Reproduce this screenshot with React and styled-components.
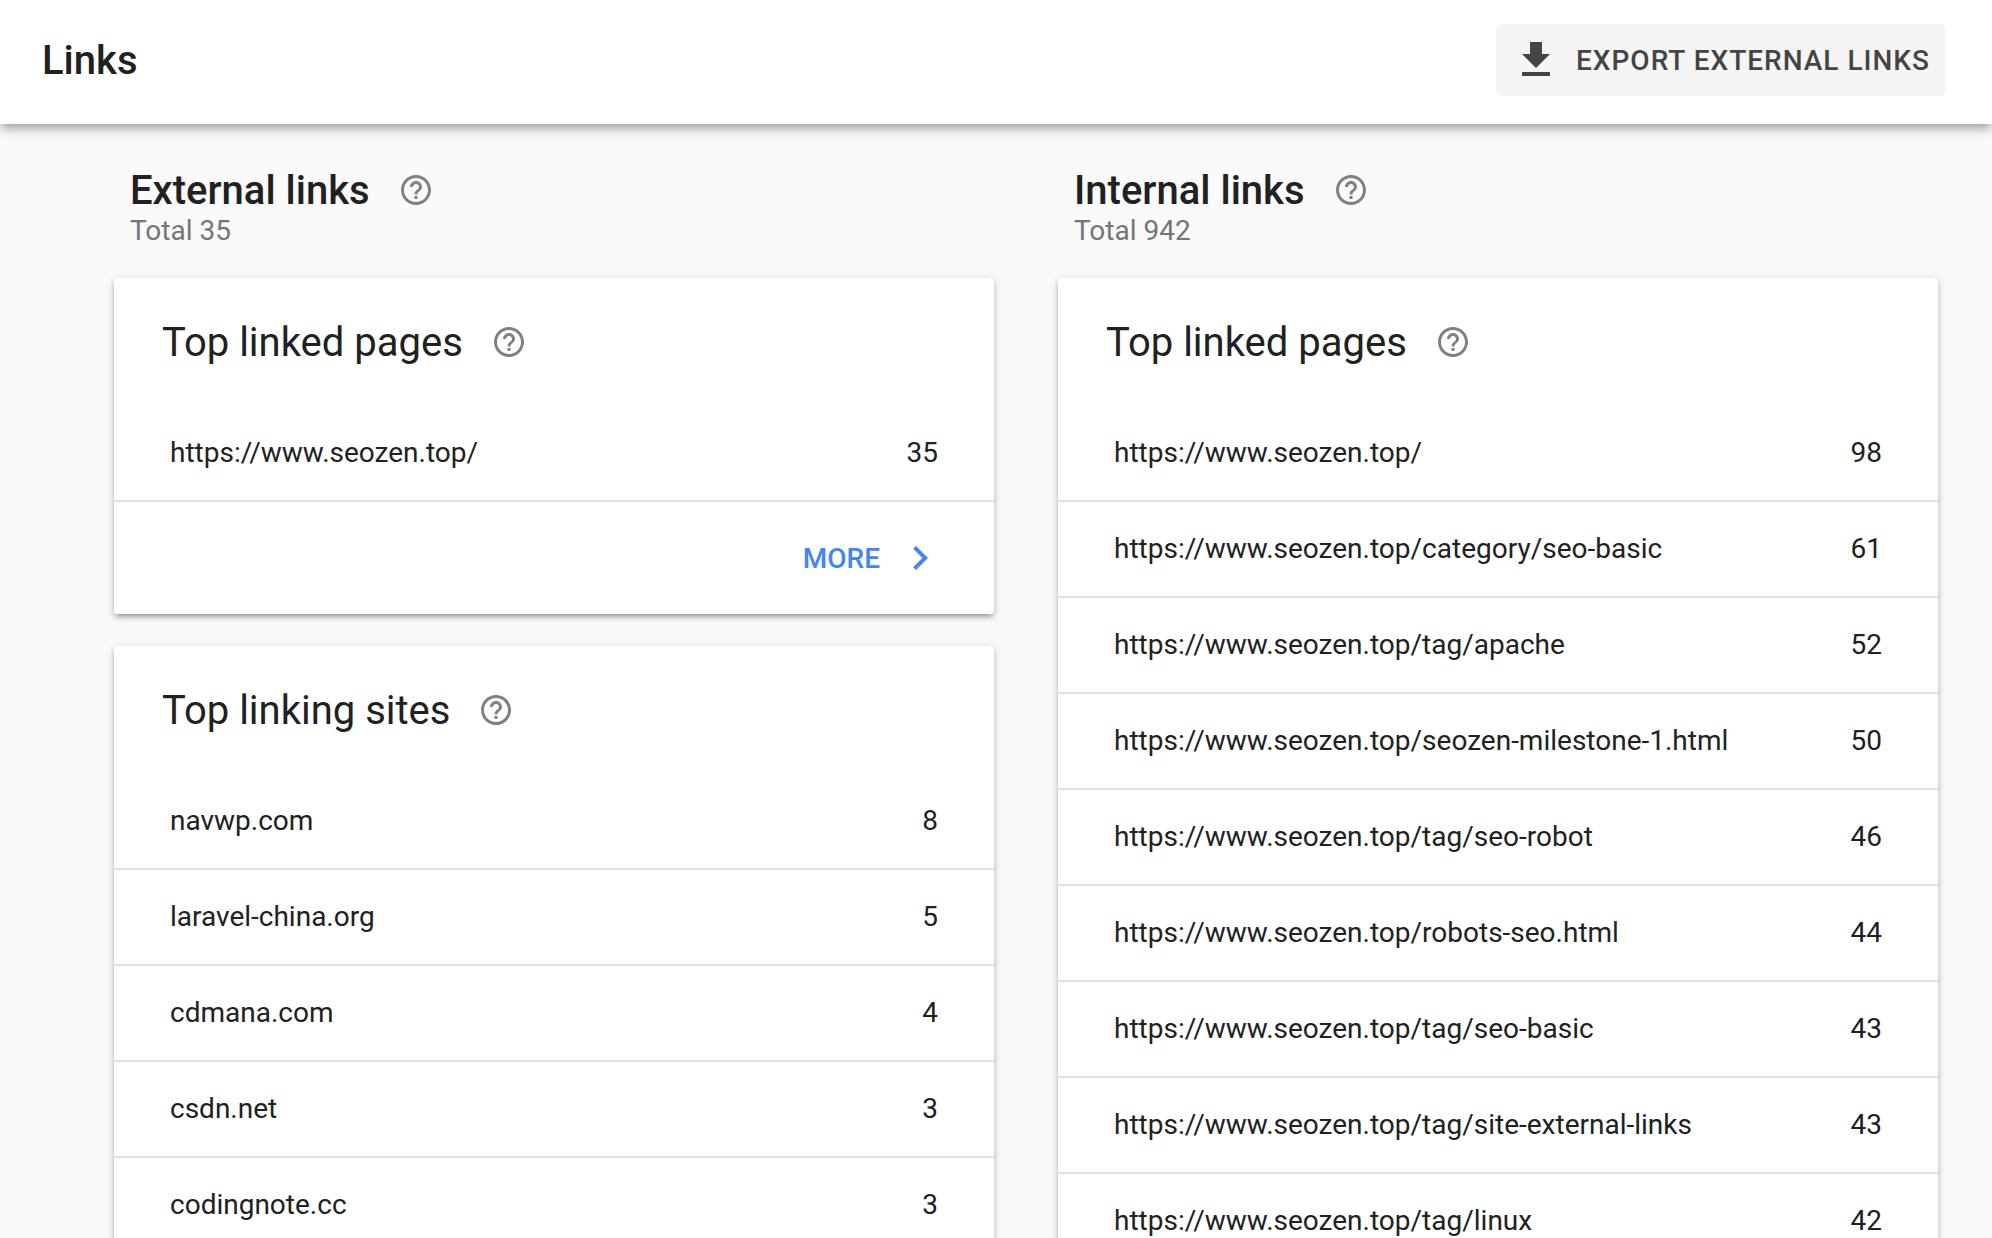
import React from "react";
import styled, { createGlobalStyle } from "styled-components";

const GlobalStyle = createGlobalStyle`
  * {
    box-sizing: border-box;
  }

  html {
    scrollbar-width: none;
  }

  body {
    margin: 0;
    background-color: #fafafa;
    color: #212121;
    font-family: Roboto, "Noto Sans", sans-serif;
    font-size: 28px;
    line-height: 40px;
  }
`;

const Header = styled.header`
  display: flex;
  align-items: center;
  justify-content: space-between;
  padding: 24px 46px 28px 42px;
  background-color: #ffffff;
  box-shadow: 0 6px 8px rgba(0, 0, 0, 0.14), 0 6px 6px -4px rgba(0, 0, 0, 0.12),
    0 2px 16px rgba(0, 0, 0, 0.2);
`;

const PageTitle = styled.h1`
  margin: 0;
  padding-top: 2px;
  font-size: 40px;
  font-weight: 500;
  line-height: 48px;
`;

const ExportButton = styled.button`
  display: flex;
  align-items: center;
  gap: 16px;
  height: 72px;
  padding: 0 16px;
  border: none;
  border-radius: 6px;
  background-color: #f5f5f5;
  color: #444444;
  font: inherit;
  font-weight: 500;
  letter-spacing: 1px;
  text-transform: uppercase;
  cursor: pointer;
`;

const ActionLabel = styled.span`
  padding-top: 2px;
`;

const Columns = styled.main`
  display: grid;
  grid-template-columns: 1fr 1fr;
  align-items: start;
  gap: 64px;
  padding: 41px 54px 32px 114px;
`;

const Column = styled.section`
  display: flex;
  flex-direction: column;
  gap: 32px;
`;

const ColumnHeader = styled.div`
  height: 81px;
  padding: 0 16px;
`;

const HeadingRow = styled.div`
  display: flex;
  align-items: center;
  gap: 28px;
`;

const ColumnTitle = styled.h2`
  margin: 0;
  padding-top: 2px;
  font-size: 40px;
  font-weight: 500;
  line-height: 48px;
`;

const Total = styled.p`
  margin: 0;
  color: #757575;
  line-height: 32px;
`;

const HelpButton = styled.button`
  display: flex;
  padding: 0;
  border: none;
  background: none;
  color: #808080;
  cursor: pointer;
`;

const Card = styled.article`
  background-color: #ffffff;
  border-radius: 4px;
  box-shadow: 0 4px 4px rgba(0, 0, 0, 0.14), 0 6px 2px -4px rgba(0, 0, 0, 0.12),
    0 2px 10px rgba(0, 0, 0, 0.2);
`;

const CardHeader = styled.div`
  display: flex;
  align-items: center;
  gap: 28px;
  height: 128px;
  padding: 0 48px;
`;

const CardTitle = styled.h3`
  margin: 0;
  padding-top: 2px;
  font-size: 40px;
  font-weight: 400;
  line-height: 48px;
`;

const LinkTable = styled.table`
  width: 100%;
  border-spacing: 0;
`;

const Cell = styled.td`
  height: 96px;
  padding: 0 56px;
  border-bottom: 2px solid #e0e0e0;
  text-align: ${({ $number }) => ($number ? "right" : "left")};
`;

const CardFooter = styled.div`
  display: flex;
  align-items: center;
  justify-content: flex-end;
  height: 112px;
  padding: 0 50px;
`;

const MoreLink = styled.a`
  display: flex;
  align-items: center;
  gap: 16px;
  color: #4285f4;
  font-weight: 500;
  text-decoration: none;
  text-transform: uppercase;
`;

const Icon = ({ size = 48, path }) => (
  <svg width={size} height={size} viewBox="0 0 24 24" fill="currentColor" aria-hidden="true">
    <path d={path} />
  </svg>
);

const DOWNLOAD = "M19 9h-4V3H9v6H5l7 7 7-7zM5 18v2h14v-2H5z";
const CHEVRON = "M10 6L8.59 7.41 13.17 12l-4.58 4.59L10 18l6-6z";
const HELP =
  "M11 18h2v-2h-2v2zm1-16C6.48 2 2 6.48 2 12s4.48 10 10 10 10-4.48 10-10S17.52 2 12 2zm0 18c-4.41 0-8-3.59-8-8s3.59-8 8-8 8 3.59 8 8-3.59 8-8 8zm0-14c-2.21 0-4 1.79-4 4h2c0-1.1.9-2 2-2s2 .9 2 2c0 2-3 1.75-3 5h2c0-2.25 3-2.5 3-5 0-2.21-1.79-4-4-4z";

const columns = [
  {
    title: "External links",
    total: 35,
    cards: [
      { title: "Top linked pages", rows: [["https://www.seozen.top/", 35]] },
      {
        title: "Top linking sites",
        rows: [
          ["navwp.com", 8],
          ["laravel-china.org", 5],
          ["cdmana.com", 4],
          ["csdn.net", 3],
          ["codingnote.cc", 3],
        ],
      },
    ],
  },
  {
    title: "Internal links",
    total: 942,
    cards: [
      {
        title: "Top linked pages",
        rows: [
          ["https://www.seozen.top/", 98],
          ["https://www.seozen.top/category/seo-basic", 61],
          ["https://www.seozen.top/tag/apache", 52],
          ["https://www.seozen.top/seozen-milestone-1.html", 50],
          ["https://www.seozen.top/tag/seo-robot", 46],
          ["https://www.seozen.top/robots-seo.html", 44],
          ["https://www.seozen.top/tag/seo-basic", 43],
          ["https://www.seozen.top/tag/site-external-links", 43],
          ["https://www.seozen.top/tag/linux", 42],
        ],
      },
    ],
  },
];

const Help = ({ topic }) => (
  <HelpButton type="button" aria-label={`Help: ${topic}`}>
    <Icon size={36} path={HELP} />
  </HelpButton>
);

const LinkCard = ({ title, rows, hasMore }) => (
  <Card>
    <CardHeader>
      <CardTitle>{title}</CardTitle>
      <Help topic={title} />
    </CardHeader>
    <LinkTable aria-label={title}>
      <tbody>
        {rows.map(([target, count]) => (
          <tr key={target}>
            <Cell>{target}</Cell>
            <Cell $number>{count}</Cell>
          </tr>
        ))}
      </tbody>
    </LinkTable>
    {hasMore && (
      <CardFooter>
        <MoreLink href="#more">
          <ActionLabel>More</ActionLabel>
          <Icon path={CHEVRON} />
        </MoreLink>
      </CardFooter>
    )}
  </Card>
);

export default function App() {
  return (
    <>
      <GlobalStyle />
      <Header>
        <PageTitle>Links</PageTitle>
        <ExportButton type="button">
          <Icon path={DOWNLOAD} />
          <ActionLabel>Export external links</ActionLabel>
        </ExportButton>
      </Header>
      <Columns>
        {columns.map(({ title, total, cards }) => (
          <Column key={title}>
            <ColumnHeader>
              <HeadingRow>
                <ColumnTitle>{title}</ColumnTitle>
                <Help topic={title} />
              </HeadingRow>
              <Total>Total {total}</Total>
            </ColumnHeader>
            {cards.map((card) => (
              <LinkCard key={card.title} {...card} hasMore={card.rows.length === 1} />
            ))}
          </Column>
        ))}
      </Columns>
    </>
  );
}
